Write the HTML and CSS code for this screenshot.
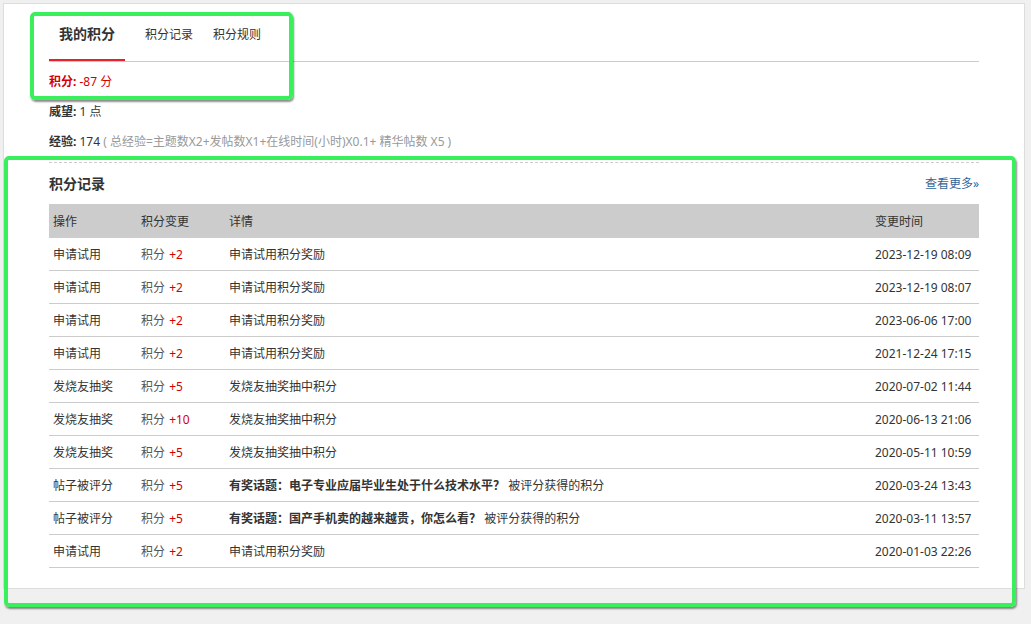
FILE: index.html
```html
<!DOCTYPE html>
<html lang="zh-CN">
<head>
<meta charset="utf-8">
<title>我的积分</title>
<link rel="stylesheet" href="styles.css">
</head>
<body>
<div class="panel">
  <div class="tabs">
    <a class="tab active">我的积分</a>
    <a class="tab">积分记录</a>
    <a class="tab">积分规则</a>
  </div>
  <ul class="info">
    <li class="score"><b>积分:</b> -87 分</li>
    <li><b>威望:</b> 1 点</li>
    <li><b>经验:</b> 174 <span class="hint">( 总经验=主题数X2+发帖数X1+在线时间(小时)X0.1+ 精华帖数 X5 )</span></li>
  </ul>
  <div class="records">
    <div class="rec-head">
      <h3>积分记录</h3>
      <a class="more">查看更多»</a>
    </div>
    <table class="log">
      <colgroup>
        <col class="c-op"><col class="c-chg"><col><col class="c-time">
      </colgroup>
      <thead>
        <tr><th>操作</th><th>积分变更</th><th>详情</th><th>变更时间</th></tr>
      </thead>
      <tbody>
        <tr><td>申请试用</td><td><span class="unit">积分</span> <em>+2</em></td><td>申请试用积分奖励</td><td>2023-12-19 08:09</td></tr>
        <tr><td>申请试用</td><td><span class="unit">积分</span> <em>+2</em></td><td>申请试用积分奖励</td><td>2023-12-19 08:07</td></tr>
        <tr><td>申请试用</td><td><span class="unit">积分</span> <em>+2</em></td><td>申请试用积分奖励</td><td>2023-06-06 17:00</td></tr>
        <tr><td>申请试用</td><td><span class="unit">积分</span> <em>+2</em></td><td>申请试用积分奖励</td><td>2021-12-24 17:15</td></tr>
        <tr><td>发烧友抽奖</td><td><span class="unit">积分</span> <em>+5</em></td><td>发烧友抽奖抽中积分</td><td>2020-07-02 11:44</td></tr>
        <tr><td>发烧友抽奖</td><td><span class="unit">积分</span> <em>+10</em></td><td>发烧友抽奖抽中积分</td><td>2020-06-13 21:06</td></tr>
        <tr><td>发烧友抽奖</td><td><span class="unit">积分</span> <em>+5</em></td><td>发烧友抽奖抽中积分</td><td>2020-05-11 10:59</td></tr>
        <tr><td>帖子被评分</td><td><span class="unit">积分</span> <em>+5</em></td><td><a class="topic">有奖话题：电子专业应届毕业生处于什么技术水平？</a> 被评分获得的积分</td><td>2020-03-24 13:43</td></tr>
        <tr><td>帖子被评分</td><td><span class="unit">积分</span> <em>+5</em></td><td><a class="topic">有奖话题：国产手机卖的越来越贵，你怎么看？</a> 被评分获得的积分</td><td>2020-03-11 13:57</td></tr>
        <tr><td>申请试用</td><td><span class="unit">积分</span> <em>+2</em></td><td>申请试用积分奖励</td><td>2020-01-03 22:26</td></tr>
      </tbody>
    </table>
  </div>
</div>
<div class="highlight hl-top"></div>
<div class="highlight hl-bottom"></div>
</body>
</html>
```

FILE: styles.css
```css
* { box-sizing: border-box; }
html, body { margin: 0; padding: 0; }
body {
  background: #f0f0f0;
  font-family: "Noto Sans", "Noto Sans CJK SC", sans-serif;
  font-size: 12px;
  color: #333;
  width: 1031px;
  height: 624px;
  overflow: hidden;
  position: relative;
}
.panel {
  margin: 3px 0 0 3px;
  width: 1022px;
  background: #fff;
  border: 1px solid #ddd;
  padding: 0 45px 20px;
}
.tabs {
  display: flex;
  border-bottom: 1px solid #ccc;
}
.tab {
  padding: 21px 10px 14px;
  line-height: 20px;
  font-size: 12px;
  color: #333;
  border-bottom: 2px solid transparent;
  cursor: pointer;
}
.tab.active {
  padding: 20px 10px 15px;
  font-size: 14px;
  font-weight: bold;
  border-bottom-color: #e4222a;
  margin-right: 10px;
}
.info {
  list-style: none;
  margin: 4px 0 0;
  padding: 0;
}
.info li {
  height: 30px;
  padding-top: 1px;
  line-height: 29px;
}
.info .score { color: #d40000; }
.hint { color: #999; }
.records {
  margin-top: 6px;
  border-top: 1px dashed #ccc;
}
.rec-head {
  display: flex;
  justify-content: space-between;
  align-items: center;
  padding: 10px 0 9px;
  line-height: 22px;
}
.rec-head h3 {
  margin: 0;
  font-size: 14px;
  font-weight: bold;
}
.more {
  color: #336699;
  cursor: pointer;
}
.log {
  width: 930px;
  table-layout: fixed;
  border-collapse: separate;
  border-spacing: 0;
}
.c-op { width: 88px; }
.c-chg { width: 88px; }
.c-time { width: 108px; }
.log th {
  background: #ccc;
  font-weight: normal;
  text-align: left;
  padding: 10px 4px 8px;
  line-height: 16px;
  color: #333;
}
.log td {
  padding: 9px 4px 7px;
  line-height: 16px;
  border-bottom: 1px solid #ccc;
  white-space: nowrap;
}
.unit { color: #555; margin-right: 1px; }
.log em {
  font-style: normal;
  color: #d40000;
}
.topic {
  font-weight: bold;
  color: #333;
}
.highlight {
  position: absolute;
  border: 4px solid #3aef5c;
  border-radius: 5px;
  box-shadow: 1px 2px 2px rgba(0, 0, 0, 0.45);
  pointer-events: none;
}
.hl-top { left: 30px; top: 12px; width: 263px; height: 88px; }
.hl-bottom { left: 4px; top: 156px; width: 1012px; height: 451px; }
```
